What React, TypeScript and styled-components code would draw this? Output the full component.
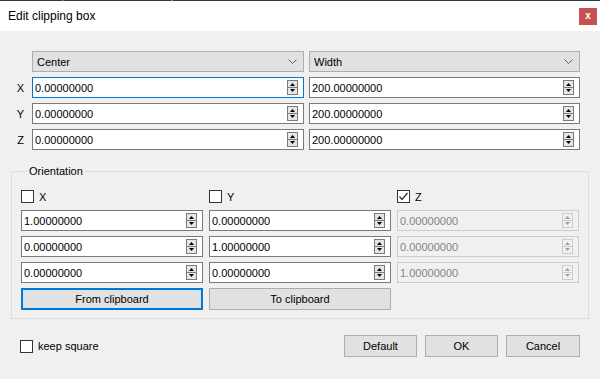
import React from "react";
import styled, { createGlobalStyle } from "styled-components";

const Global = createGlobalStyle`
  html, body { margin: 0; padding: 0; background: #f0f0f0; }
  body {
    font-family: "Liberation Sans", Arial, sans-serif;
    font-size: 11px;
    color: #000;
  }
  * { box-sizing: border-box; }
`;

const Window = styled.div`
  width: 600px;
  height: 379px;
  display: flex;
  flex-direction: column;
  background: #f0f0f0;
  overflow: hidden;
`;

const TopEdge = styled.div`
  height: 1px;
  flex: none;
  background: linear-gradient(90deg, #2f3a3c 0, #2f3a3c 62px, #6c7375 62px, #6c7375 64px, #2f3a3c 64px, #2f3a3c 171px, #7a8080 171px, #7a8080 173px, #2f3a3c 173px);
`;

const TitleBar = styled.div`
  height: 30px;
  flex: none;
  background: #ffffff;
  display: flex;
  align-items: center;
  justify-content: space-between;
  padding: 0 3px 0 8px;
`;

const Title = styled.span`
  font-size: 12px;
  color: #000;
`;

const CloseButton = styled.div`
  width: 18px;
  height: 17px;
  background: #c75050;
  color: #fff;
  display: flex;
  align-items: center;
  justify-content: center;
  font-size: 10px;
  font-weight: bold;
  line-height: 1;
  padding-bottom: 1px;
`;

const Body = styled.div`
  flex: 1;
  display: flex;
  flex-direction: column;
  padding-top: 20px;
`;

const TopGrid = styled.div`
  display: grid;
  grid-template-columns: 27px 272px 271px;
  grid-auto-rows: 21px;
  column-gap: 5px;
  row-gap: 5px;
`;

const AxisLabel = styled.div`
  display: flex;
  align-items: center;
  justify-content: flex-end;
  padding-right: 3px;
`;

const Combo = styled.div`
  height: 21px;
  border: 1px solid #adadad;
  background: #e1e1e1;
  display: flex;
  align-items: center;
  justify-content: space-between;
  padding: 0 6px 0 4px;
`;

const Field = styled.div<{ $focus?: boolean; $disabled?: boolean }>`
  height: 21px;
  border: 1px solid ${(p) => (p.$focus ? "#0078d7" : p.$disabled ? "#cccccc" : "#7a7a7a")};
  background: ${(p) => (p.$disabled ? "#f0f0f0" : "#ffffff")};
  color: ${(p) => (p.$disabled ? "#838383" : "#000")};
  display: flex;
  align-items: center;
  padding: 0 5px 0 2px;
`;

const FieldText = styled.span`
  flex: 1;
`;

const SpinBox = styled.svg`
  flex: none;
  display: block;
`;

const Group = styled.fieldset`
  margin: 15px 0 0 11px;
  width: 578px;
  border: 1px solid #dcdcdc;
  padding: 10px 9px 8px 9px;
  min-inline-size: 0;
`;

const Legend = styled.legend`
  margin-left: 6px;
  padding: 0 2px;
  font-size: 11px;
  line-height: 13px;
`;

const OrientGrid = styled.div`
  display: grid;
  grid-template-columns: repeat(3, 182px);
  grid-template-rows: 17px repeat(3, 21px) 22px;
  column-gap: 6px;
  row-gap: 5px;
`;

const CheckRow = styled.label`
  display: flex;
  align-items: center;
  gap: 5px;
`;

const Box = styled.span`
  width: 13px;
  height: 13px;
  border: 1px solid #333;
  background: #fff;
  display: flex;
  align-items: center;
  justify-content: center;
  flex: none;
`;

const Button = styled.div<{ $focus?: boolean; $w?: number }>`
  height: 22px;
  width: ${(p) => (p.$w ? `${p.$w}px` : "auto")};
  background: #e1e1e1;
  border: ${(p) => (p.$focus ? "2px solid #0078d7" : "1px solid #adadad")};
  display: flex;
  align-items: center;
  justify-content: center;
`;

const BottomRow = styled.div`
  margin-top: 16px;
  display: flex;
  align-items: center;
  justify-content: space-between;
  padding: 0 20px 0 20px;
`;

const ButtonGroup = styled.div`
  display: flex;
  gap: 8px;
`;

const Spin: React.FC<{ disabled?: boolean }> = ({ disabled }) => {
  const c = disabled ? "#a0a0a0" : "#000";
  const b = disabled ? "#cccccc" : "#7a7a7a";
  return (
    <SpinBox width="11" height="15" viewBox="0 0 11 15">
      <rect x="0.5" y="0.5" width="10" height="14" fill={disabled ? "#f0f0f0" : "#e5e5e5"} stroke={b} />
      <line x1="1" y1="7.5" x2="10" y2="7.5" stroke={b} />
      <polygon points="5.5,3 8,6 3,6" fill={c} />
      <polygon points="3,9 8,9 5.5,12" fill={c} />
    </SpinBox>
  );
};

const SpinField: React.FC<{ value: string; focus?: boolean; disabled?: boolean }> = ({ value, focus, disabled }) => (
  <Field $focus={focus} $disabled={disabled}>
    <FieldText>{value}</FieldText>
    <Spin disabled={disabled} />
  </Field>
);

const Chevron = () => (
  <svg width="9" height="6" viewBox="0 0 9 6">
    <polyline points="0.5,0.5 4.5,4.5 8.5,0.5" fill="none" stroke="#606060" strokeWidth="1" />
  </svg>
);

const Check: React.FC<{ label: string; checked?: boolean }> = ({ label, checked }) => (
  <CheckRow>
    <Box>
      {checked && (
        <svg width="11" height="11" viewBox="0 0 11 11">
          <polyline points="1.5,5.5 4,8.5 9.5,2" fill="none" stroke="#333" strokeWidth="1.3" />
        </svg>
      )}
    </Box>
    <span>{label}</span>
  </CheckRow>
);

export default function App() {
  const rows = [
    ["1.00000000", "0.00000000", "0.00000000"],
    ["0.00000000", "1.00000000", "0.00000000"],
    ["0.00000000", "0.00000000", "1.00000000"],
  ];
  return (
    <Window>
      <Global />
      <TopEdge />
      <TitleBar>
        <Title>Edit clipping box</Title>
        <CloseButton>x</CloseButton>
      </TitleBar>
      <Body>
        <TopGrid>
          <span />
          <Combo>
            <span>Center</span>
            <Chevron />
          </Combo>
          <Combo>
            <span>Width</span>
            <Chevron />
          </Combo>
          {["X", "Y", "Z"].map((a, i) => (
            <React.Fragment key={a}>
              <AxisLabel>{a}</AxisLabel>
              <SpinField value="0.00000000" focus={i === 0} />
              <SpinField value="200.00000000" />
            </React.Fragment>
          ))}
        </TopGrid>
        <Group>
          <Legend>Orientation</Legend>
          <OrientGrid>
            <Check label="X" />
            <Check label="Y" />
            <Check label="Z" checked />
            {rows.map((r, i) => (
              <React.Fragment key={i}>
                <SpinField value={r[0]} />
                <SpinField value={r[1]} />
                <SpinField value={r[2]} disabled />
              </React.Fragment>
            ))}
            <Button $focus>From clipboard</Button>
            <Button>To clipboard</Button>
          </OrientGrid>
        </Group>
        <BottomRow>
          <Check label="keep square" />
          <ButtonGroup>
            <Button $w={73}>Default</Button>
            <Button $w={73}>OK</Button>
            <Button $w={74}>Cancel</Button>
          </ButtonGroup>
        </BottomRow>
      </Body>
    </Window>
  );
}
